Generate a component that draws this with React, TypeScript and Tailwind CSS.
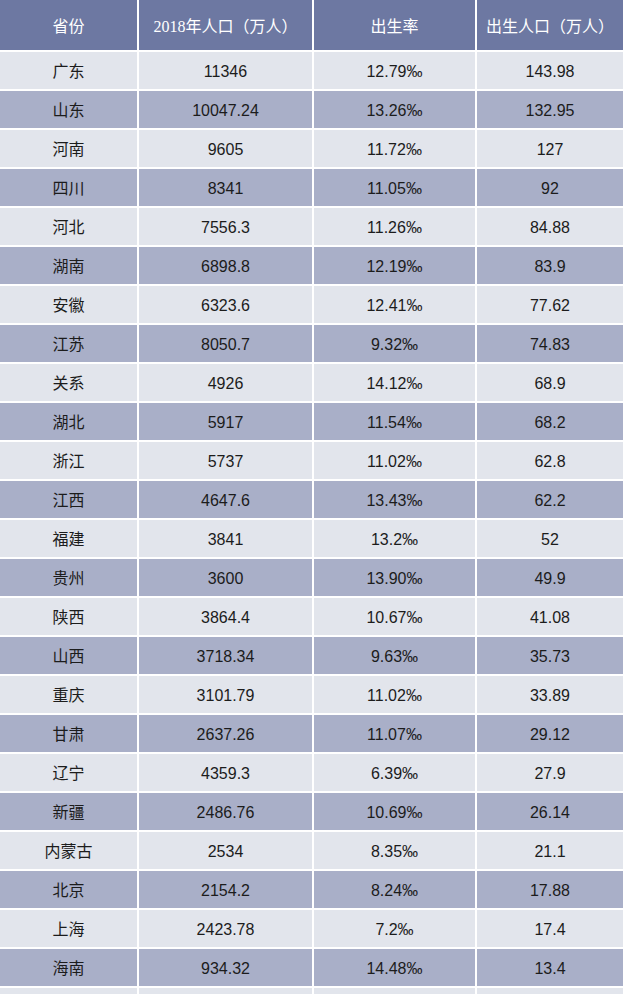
import React from "react";

const rows: [string, string, string, string][] = [
  ["广东", "11346", "12.79‰", "143.98"],
  ["山东", "10047.24", "13.26‰", "132.95"],
  ["河南", "9605", "11.72‰", "127"],
  ["四川", "8341", "11.05‰", "92"],
  ["河北", "7556.3", "11.26‰", "84.88"],
  ["湖南", "6898.8", "12.19‰", "83.9"],
  ["安徽", "6323.6", "12.41‰", "77.62"],
  ["江苏", "8050.7", "9.32‰", "74.83"],
  ["关系", "4926", "14.12‰", "68.9"],
  ["湖北", "5917", "11.54‰", "68.2"],
  ["浙江", "5737", "11.02‰", "62.8"],
  ["江西", "4647.6", "13.43‰", "62.2"],
  ["福建", "3841", "13.2‰", "52"],
  ["贵州", "3600", "13.90‰", "49.9"],
  ["陕西", "3864.4", "10.67‰", "41.08"],
  ["山西", "3718.34", "9.63‰", "35.73"],
  ["重庆", "3101.79", "11.02‰", "33.89"],
  ["甘肃", "2637.26", "11.07‰", "29.12"],
  ["辽宁", "4359.3", "6.39‰", "27.9"],
  ["新疆", "2486.76", "10.69‰", "26.14"],
  ["内蒙古", "2534", "8.35‰", "21.1"],
  ["北京", "2154.2", "8.24‰", "17.88"],
  ["上海", "2423.78", "7.2‰", "17.4"],
  ["海南", "934.32", "14.48‰", "13.4"],
];

const gridCols = "grid grid-cols-[137px_173px_161px_146px] gap-x-[2px] pr-[1px]";

export default function App() {
  return (
    <div className="w-[624px] h-[994px] overflow-hidden bg-white flex flex-col gap-y-[2px]">
      <div
        className={`${gridCols} h-[50px] shrink-0 text-white text-[16px]`}
        style={{ fontFamily: '"Liberation Serif", "Noto Sans CJK SC", serif' }}
      >
        {["省份", "2018年人口（万人）", "出生率", "出生人口（万人）"].map((h, i) => (
          <div key={i} className="bg-[#6d78a2] flex items-center justify-center whitespace-nowrap pt-[3px]">
            {h}
          </div>
        ))}
      </div>
      {rows.map((r, idx) => (
        <div
          key={idx}
          className={`${gridCols} h-[37px] shrink-0 text-[#1c1c1c] text-[16px]`}
          style={{ fontFamily: '"Liberation Sans", "Noto Sans CJK SC", sans-serif' }}
        >
          {r.map((c, i) => (
            <div
              key={i}
              className={`${idx % 2 === 0 ? "bg-[#e2e5ec]" : "bg-[#a9afc8]"} flex items-center justify-center pt-[2px]`}
            >
              {c}
            </div>
          ))}
        </div>
      ))}
      <div className={`${gridCols} h-[37px] shrink-0`}>
        {[0, 1, 2, 3].map((i) => (
          <div key={i} className="bg-[#e2e5ec]" />
        ))}
      </div>
    </div>
  );
}
